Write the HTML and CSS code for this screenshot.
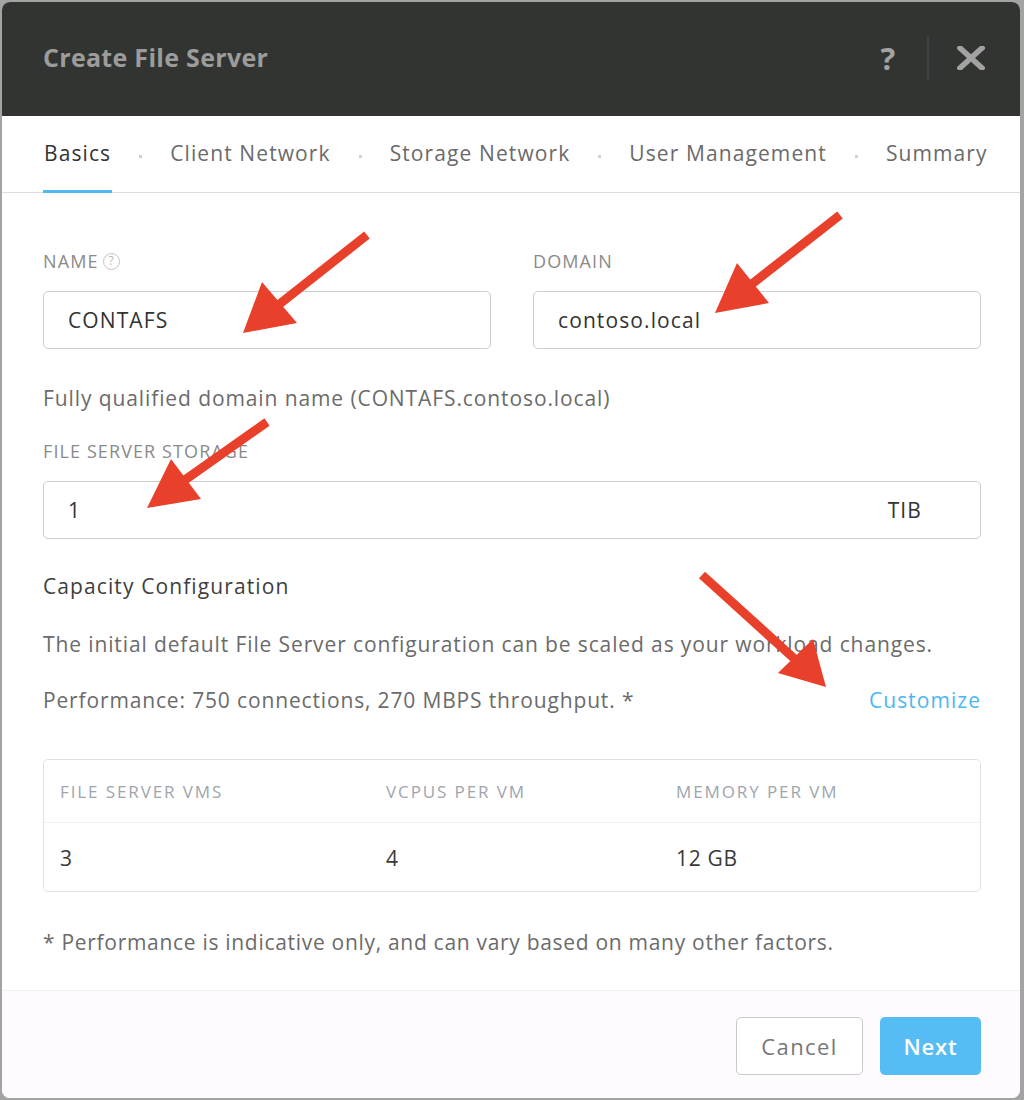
FILE: index.html
```html
<!DOCTYPE html>
<html lang="en">
<head>
<meta charset="utf-8">
<title>Create File Server</title>
<link rel="stylesheet" href="styles.css">
</head>
<body>
<div class="modal">
  <header class="modal-header">
    <h1 class="modal-title">Create File Server</h1>
    <div class="header-actions">
      <span class="help-btn">?</span>
      <span class="divider"></span>
      <svg class="close-btn" width="28" height="24" viewBox="0 0 28 24" aria-label="Close">
        <path d="M3 2 L25 22 M25 2 L3 22" stroke="#a2a2a2" stroke-width="5.5" stroke-linecap="square"/>
      </svg>
    </div>
  </header>
  <nav class="tabs">
    <span class="tab active">Basics</span>
    <span class="dot"></span>
    <span class="tab">Client Network</span>
    <span class="dot"></span>
    <span class="tab">Storage Network</span>
    <span class="dot"></span>
    <span class="tab">User Management</span>
    <span class="dot"></span>
    <span class="tab">Summary</span>
  </nav>
  <main class="modal-body">
    <div class="row-two">
      <div class="field">
        <label class="field-label">NAME <span class="q-icon">?</span></label>
        <div class="input">CONTAFS</div>
      </div>
      <div class="field">
        <label class="field-label">DOMAIN</label>
        <div class="input">contoso.local</div>
      </div>
    </div>
    <p class="helper">Fully qualified domain name (CONTAFS.contoso.local)</p>
    <label class="field-label storage-label">FILE SERVER STORAGE</label>
    <div class="input input-unit"><span>1</span><span class="unit">TIB</span></div>
    <h2 class="section-title">Capacity Configuration</h2>
    <p class="desc">The initial default File Server configuration can be scaled as your workload changes.</p>
    <div class="perf-row">
      <span>Performance: 750 connections, 270 MBPS throughput. *</span>
      <a class="link">Customize</a>
    </div>
    <div class="table">
      <div class="t-head">
        <span class="c1">FILE SERVER VMS</span>
        <span class="c2">VCPUS PER VM</span>
        <span class="c3">MEMORY PER VM</span>
      </div>
      <div class="t-row">
        <span class="c1">3</span>
        <span class="c2">4</span>
        <span class="c3">12 GB</span>
      </div>
    </div>
    <p class="footnote">* Performance is indicative only, and can vary based on many other factors.</p>
  </main>
  <footer class="modal-footer">
    <button class="btn btn-cancel">Cancel</button>
    <button class="btn btn-next">Next</button>
  </footer>
</div>
<svg class="arrows" width="1024" height="1100" viewBox="0 0 1024 1100">
  <g stroke="#e8402a" stroke-width="9" fill="#e8402a">
    <line x1="367" y1="235" x2="272" y2="310"/>
    <polygon stroke="none" points="243,333 262,282 297,323"/>
    <line x1="840" y1="215" x2="748" y2="287"/>
    <polygon stroke="none" points="715,313 737,263 769,303"/>
    <line x1="267" y1="422" x2="182" y2="482"/>
    <polygon stroke="none" points="147,508 171,459 201,499"/>
    <line x1="702" y1="575" x2="798" y2="662"/>
    <polygon stroke="none" points="826,687 778,673 813,639"/>
  </g>
</svg>
</body>
</html>
```
FILE: styles.css
```css
* { box-sizing: border-box; }
html, body { margin: 0; padding: 0; }
body {
  background: #a3a3a3;
  font-family: "Open Sans", "Liberation Sans", sans-serif;
  position: relative;
  width: 1024px;
  height: 1100px;
  overflow: hidden;
}
.modal {
  position: absolute;
  left: 2px;
  top: 2px;
  width: 1018px;
  height: 1096px;
  background: #fff;
  border-radius: 8px;
  overflow: hidden;
  display: flex;
  flex-direction: column;
}
.modal-header {
  height: 114px;
  background: #323431;
  display: flex;
  align-items: center;
  justify-content: space-between;
  padding: 0 35px 4px 41px;
  flex-shrink: 0;
}
.modal-title {
  margin: 0;
  font-size: 25px;
  font-weight: 700;
  color: #9c9c9c;
  letter-spacing: 0.3px;
  line-height: 30px;
}
.header-actions {
  display: flex;
  align-items: center;
  padding-top: 2px;
}
.help-btn {
  font-size: 31px;
  font-weight: 700;
  color: #a2a2a2;
  line-height: 30px;
  width: 20px;
  text-align: center;
}
.divider {
  width: 2px;
  height: 44px;
  background: #3c4346;
  margin: 0 28px 0 29px;
}
.close-btn { display: block; }

.tabs {
  height: 77px;
  display: flex;
  align-items: stretch;
  padding-left: 41px;
  border-bottom: 1px solid #dcdde3;
  flex-shrink: 0;
}
.tab {
  display: flex;
  align-items: center;
  padding: 0 1px;
  font-size: 21px;
  color: #6a6a6a;
  border-bottom: 3px solid transparent;
  margin-bottom: -1px;
  letter-spacing: 1.1px;
}
.tab.active {
  color: #333;
  border-bottom-color: #4fb9f0;
}
.dot {
  width: 3px;
  height: 3px;
  background: #cfd0d4;
  align-self: center;
  margin: 4px 27px 0 27px;
}

.modal-body {
  flex: 1;
  padding: 58px 39px 0 41px;
  display: flex;
  flex-direction: column;
}
.row-two {
  display: grid;
  grid-template-columns: 1fr 1fr;
  column-gap: 42px;
}
.field { display: flex; flex-direction: column; }
.field-label {
  font-size: 18px;
  line-height: 20px;
  color: #8a8a8a;
  display: flex;
  align-items: center;
  gap: 4px;
  letter-spacing: 1.1px;
}
.q-icon {
  width: 17px;
  height: 17px;
  border: 1.5px solid #c4c4c4;
  border-radius: 50%;
  font-size: 12px;
  line-height: 14px;
  text-align: center;
  color: #b8b8b8;
  letter-spacing: 0;
}
.input {
  margin-top: 20px;
  height: 58px;
  border: 1.5px solid #cdcdcd;
  border-radius: 5px;
  padding: 0 24px;
  display: flex;
  align-items: center;
  font-size: 21px;
  color: #333;
  letter-spacing: 1.1px;
}
.input-unit {
  justify-content: space-between;
  padding-right: 58px;
}
.helper, .desc, .perf-row, .footnote, .section-title {
  font-size: 21px;
  line-height: 24px;
  letter-spacing: 0.9px;
  color: #6b6b6b;
}
.helper { margin: 37px 0 0; }
.storage-label { margin-top: 31px; }
.section-title {
  margin: 35px 0 0;
  font-weight: 400;
  color: #3e3e3e;
  letter-spacing: 1.1px;
}
.desc { margin: 34px 0 0; letter-spacing: 0.88px; }
.perf-row {
  margin-top: 32px;
  display: flex;
  justify-content: space-between;
  letter-spacing: 0.85px;
}
.link { color: #4ab8ee; letter-spacing: 1.05px; }
.table {
  margin-top: 47px;
  border: 1.5px solid #e0e1e6;
  border-radius: 5px;
}
.t-head, .t-row {
  display: grid;
  grid-template-columns: 326px 290px 1fr;
  padding-left: 16px;
}
.t-head {
  height: 63px;
  align-items: center;
  border-bottom: 1px solid #f0f0f3;
  font-size: 17px;
  color: #9ea5ae;
  letter-spacing: 1.9px;
  padding-top: 0;
}
.t-row {
  height: 68px;
  align-items: center;
  font-size: 21px;
  color: #3a3a3a;
  letter-spacing: 0.7px;
  padding-top: 2px;
}
.footnote {
  margin: 38px 0 0;
  letter-spacing: 0.7px;
}
.modal-footer {
  height: 108px;
  flex-shrink: 0;
  background: #fdfbfd;
  border-top: 1px solid #f1eff3;
  display: flex;
  justify-content: flex-end;
  align-items: flex-start;
  gap: 17px;
  padding: 26px 39px 0 0;
}
.btn {
  height: 58px;
  border-radius: 5px;
  font-family: "Open Sans", "Liberation Sans", sans-serif;
  font-size: 22px;
  padding: 0;
  letter-spacing: 1.4px;
}
.btn-cancel {
  width: 127px;
  background: #fff;
  border: 1.5px solid #c9c9c9;
  color: #777;
}
.btn-next {
  width: 101px;
  background: #55bcf5;
  border: none;
  color: #fff;
  font-weight: 600;
  letter-spacing: 0.8px;
}
.arrows {
  position: absolute;
  left: 0;
  top: 0;
  pointer-events: none;
}
```
